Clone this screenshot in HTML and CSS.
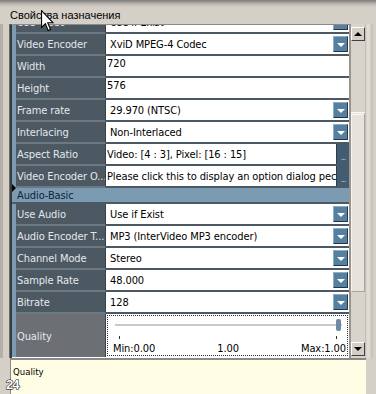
FILE: index.html
```html
<!DOCTYPE html>
<html lang="ru">
<head>
    <meta charset="UTF-8">
    <meta name="viewport" content="width=device-width, initial-scale=1.0">
    <title>Свойства назначения</title>
    <link rel="stylesheet" href="styles.css">
</head>
<body>
    <div class="titlebar">Свойства назначения</div>

    <div class="main">
        <div class="side"></div>

        <div class="grid">
            <div class="rows">
                <div class="row">
                    <div class="stripe"></div>
                    <div class="label">Use Video</div>
                    <div class="value combo"><span class="text">Use if Exist</span><span class="drop"></span></div>
                </div>
                <div class="row">
                    <div class="stripe"></div>
                    <div class="label">Video Encoder</div>
                    <div class="value combo"><span class="text">XviD MPEG-4 Codec</span><span class="drop"></span></div>
                </div>
                <div class="row">
                    <div class="stripe"></div>
                    <div class="label">Width</div>
                    <div class="value field">720</div>
                </div>
                <div class="row">
                    <div class="stripe"></div>
                    <div class="label">Height</div>
                    <div class="value field">576</div>
                </div>
                <div class="row">
                    <div class="stripe"></div>
                    <div class="label">Frame rate</div>
                    <div class="value combo"><span class="text">29.970 (NTSC)</span><span class="drop"></span></div>
                </div>
                <div class="row">
                    <div class="stripe"></div>
                    <div class="label">Interlacing</div>
                    <div class="value combo"><span class="text">Non-Interlaced</span><span class="drop"></span></div>
                </div>
                <div class="row">
                    <div class="stripe"></div>
                    <div class="label">Aspect Ratio</div>
                    <div class="value dialog"><span class="text">Video: [4 : 3], Pixel: [16 : 15]</span><span class="dots">...</span></div>
                </div>
                <div class="row">
                    <div class="stripe"></div>
                    <div class="label">Video Encoder O...</div>
                    <div class="value dialog"><span class="text">Please click this to display an option dialog peculiar to the encoder</span><span class="dots">...</span></div>
                </div>

                <div class="group">
                    <span class="marker"></span>
                    Audio-Basic
                </div>

                <div class="row">
                    <div class="stripe"></div>
                    <div class="label">Use Audio</div>
                    <div class="value combo"><span class="text">Use if Exist</span><span class="drop"></span></div>
                </div>
                <div class="row">
                    <div class="stripe"></div>
                    <div class="label">Audio Encoder T...</div>
                    <div class="value combo"><span class="text">MP3 (InterVideo MP3 encoder)</span><span class="drop"></span></div>
                </div>
                <div class="row">
                    <div class="stripe"></div>
                    <div class="label">Channel Mode</div>
                    <div class="value combo"><span class="text">Stereo</span><span class="drop"></span></div>
                </div>
                <div class="row">
                    <div class="stripe"></div>
                    <div class="label">Sample Rate</div>
                    <div class="value combo"><span class="text">48.000</span><span class="drop"></span></div>
                </div>
                <div class="row">
                    <div class="stripe"></div>
                    <div class="label">Bitrate</div>
                    <div class="value combo"><span class="text">128</span><span class="drop"></span></div>
                </div>
                <div class="row row-quality">
                    <div class="stripe"></div>
                    <div class="label">Quality</div>
                    <div class="value">
                        <div class="slider">
                            <div class="track"><span class="thumb"></span></div>
                            <div class="ticks"><span></span><span></span></div>
                            <div class="scale"><span>Min:0.00</span><span>1.00</span><span>Max:1.00</span></div>
                        </div>
                    </div>
                </div>
            </div>
        </div>

        <div class="scrollbar">
            <div class="arrow up"></div>
            <div class="thumb-bar"></div>
            <div class="arrow down"></div>
        </div>

        <div class="frame"></div>
    </div>

    <div class="desc">Quality</div>

    <div class="page-num">24</div>

    <svg class="cursor" width="13" height="22" viewBox="0 0 12 20">
        <path d="M0.5 0.5 L0.5 16 L4 12.6 L6.6 18.8 L8.8 17.8 L6.2 11.6 L11 11.6 Z" fill="#fff" stroke="#000" stroke-width="1"/>
    </svg>
</body>
</html>
```

FILE: styles.css
```css
* {
    box-sizing: border-box;
}

body {
    margin: 0;
    width: 376px;
    height: 394px;
    overflow: hidden;
    position: relative;
    background-color: #d4d0c8;
    font-family: "Liberation Sans", Arial, sans-serif;
}

.titlebar {
    height: 24px;
    padding: 9px 0 0 10px;
    font-size: 11px;
    line-height: 13px;
    color: #000;
    background: linear-gradient(#7c7c7c 0, #bcb8b0 4px, #d4d0c8 7px);
}

.main {
    display: flex;
    height: 334px;
}

.side {
    width: 10px;
    border-left: 3px solid #b4b0a8;
    border-right: 1px solid #6a6a6a;
}

/* property grid */
.grid {
    width: 341px;
    height: 334px;
    overflow: hidden;
    background-color: #fff;
    border-top: 1px solid #8a8a8a;
    border-left: 2px solid #3a3a3a;
    border-right: 2px solid #9a968e;
    font-family: "Liberation Sans Narrow", "DejaVu Sans Condensed", "Liberation Sans", sans-serif;
    font-size: 11px;
    line-height: 13px;
    letter-spacing: -0.1px;
}

.rows {
    margin-top: -13px;
}

.row {
    display: flex;
    height: 22px;
}

.stripe {
    width: 4px;
    background-color: #7b9bb3;
}

.label {
    width: 90px;
    padding: 4px 0 0 1px;
    background-color: #4c5862;
    color: #e4e8ec;
    border-right: 1px solid #38424a;
    border-bottom: 2px solid #6c7882;
    white-space: nowrap;
    overflow: hidden;
}

.value {
    width: 243px;
    display: flex;
    border-bottom: 2px solid #4c5862;
    color: #000;
    white-space: nowrap;
    overflow: hidden;
}

.value .text {
    flex: 1;
    overflow: hidden;
    padding-top: 4px;
}

.combo .text {
    padding-left: 4px;
}

.dialog .text {
    padding-left: 1px;
}

.field {
    padding: 1px 0 0 1px;
}

.drop {
    width: 15px;
    height: 16px;
    margin: 2px 1px 0 0;
    background-color: #56809f;
    border-top: 1px solid #8eaec6;
    border-left: 1px solid #8eaec6;
    border-right: 1px solid #24364a;
    border-bottom: 1px solid #24364a;
    display: flex;
    align-items: center;
    justify-content: center;
}

.drop::after {
    content: "";
    border-left: 4px solid transparent;
    border-right: 4px solid transparent;
    border-top: 4px solid #fff;
    margin-top: 2px;
}

.dots {
    width: 13px;
    height: 20px;
    background-color: #425d72;
    border-left: 1px solid #2c3c4a;
    color: #b8c4ce;
    font-size: 9px;
    line-height: 9px;
    letter-spacing: -1px;
    display: flex;
    align-items: flex-end;
    justify-content: center;
    padding-bottom: 2px;
}

.group {
    position: relative;
    height: 16px;
    padding: 1px 0 0 5px;
    background-color: #7b9bb3;
    border-bottom: 2px solid #4c5862;
    color: #10233a;
}

.marker {
    position: absolute;
    left: 0;
    top: -4px;
    border-top: 4px solid transparent;
    border-bottom: 4px solid transparent;
    border-left: 4px solid #000;
}

.row-quality {
    height: 43px;
}

.row-quality .label {
    background-color: #6c7074;
    padding-top: 16px;
    border-bottom: none;
}

.row-quality .value {
    padding: 1px 1px 0 1px;
    border-bottom: none;
}

.slider {
    width: 100%;
    height: 41px;
    border: 1px dotted #333;
    display: flex;
    flex-direction: column;
}

.track {
    height: 12px;
    margin: 3px 5px 0 7px;
    background: linear-gradient(transparent 5px, #c6cacf 5px, #c6cacf 7px, transparent 7px);
    display: flex;
    justify-content: flex-end;
}

.thumb {
    width: 5px;
    height: 12px;
    margin-right: 1px;
    background-color: #6f8aa2;
    border-radius: 2px;
}

.ticks {
    height: 4px;
    margin-top: 5px;
    padding: 0 10px 0 11px;
    display: flex;
    justify-content: space-between;
}

.ticks span {
    width: 1px;
    background-color: #333;
}

.scale {
    margin-top: 3px;
    padding: 0 1px 0 5px;
    display: flex;
    justify-content: space-between;
}

/* scrollbar */
.scrollbar {
    width: 14px;
    display: flex;
    flex-direction: column;
    background-color: #d8d4cc;
}

.arrow {
    height: 14px;
    background-color: #d4d0c8;
    border-top: 1px solid #fff;
    border-left: 1px solid #fff;
    border-right: 1px solid #404040;
    border-bottom: 1px solid #404040;
    display: flex;
    align-items: center;
    justify-content: center;
}

.arrow.up {
    margin-top: 3px;
}

.arrow.up::after {
    content: "";
    border-left: 4px solid transparent;
    border-right: 4px solid transparent;
    border-bottom: 4px solid #000;
}

.arrow.down {
    margin-top: auto;
    margin-bottom: 2px;
}

.arrow.down::after {
    content: "";
    border-left: 4px solid transparent;
    border-right: 4px solid transparent;
    border-top: 4px solid #000;
}

.thumb-bar {
    height: 180px;
    margin-top: 71px;
    background-color: #e6e2dc;
    border-top: 3px double #f8f8f8;
    border-left: 1px solid #f4f4f4;
    border-right: 1px solid #a8a49c;
    border-bottom: 1px solid #a8a49c;
}

.frame {
    width: 11px;
    border-left: 1px solid #c4c0b8;
    background: linear-gradient(90deg, #d4d0c8 0, #e4e0da 2px, #d4d0c8 5px, #bcb8b0 6px, #d4d0c8 7px);
}

/* description pane */
.desc {
    height: 36px;
    width: 356px;
    margin-left: 10px;
    padding: 6px 0 0 2px;
    background-color: #fffde3;
    border-top: 2px solid #8a8a8a;
    border-left: 1px solid #8a8a8a;
    font-family: "Liberation Sans Narrow", "DejaVu Sans Condensed", "Liberation Sans", sans-serif;
    font-size: 9.5px;
    line-height: 12px;
}

.page-num {
    position: absolute;
    left: 6px;
    top: 378px;
    font-family: "Liberation Sans", Arial, sans-serif;
    font-size: 13px;
    font-weight: bold;
    line-height: 13px;
    color: #fff;
    -webkit-text-stroke: 1px #000;
    paint-order: stroke fill;
    letter-spacing: -1px;
}

.cursor {
    position: absolute;
    left: 41px;
    top: 10px;
}
```
